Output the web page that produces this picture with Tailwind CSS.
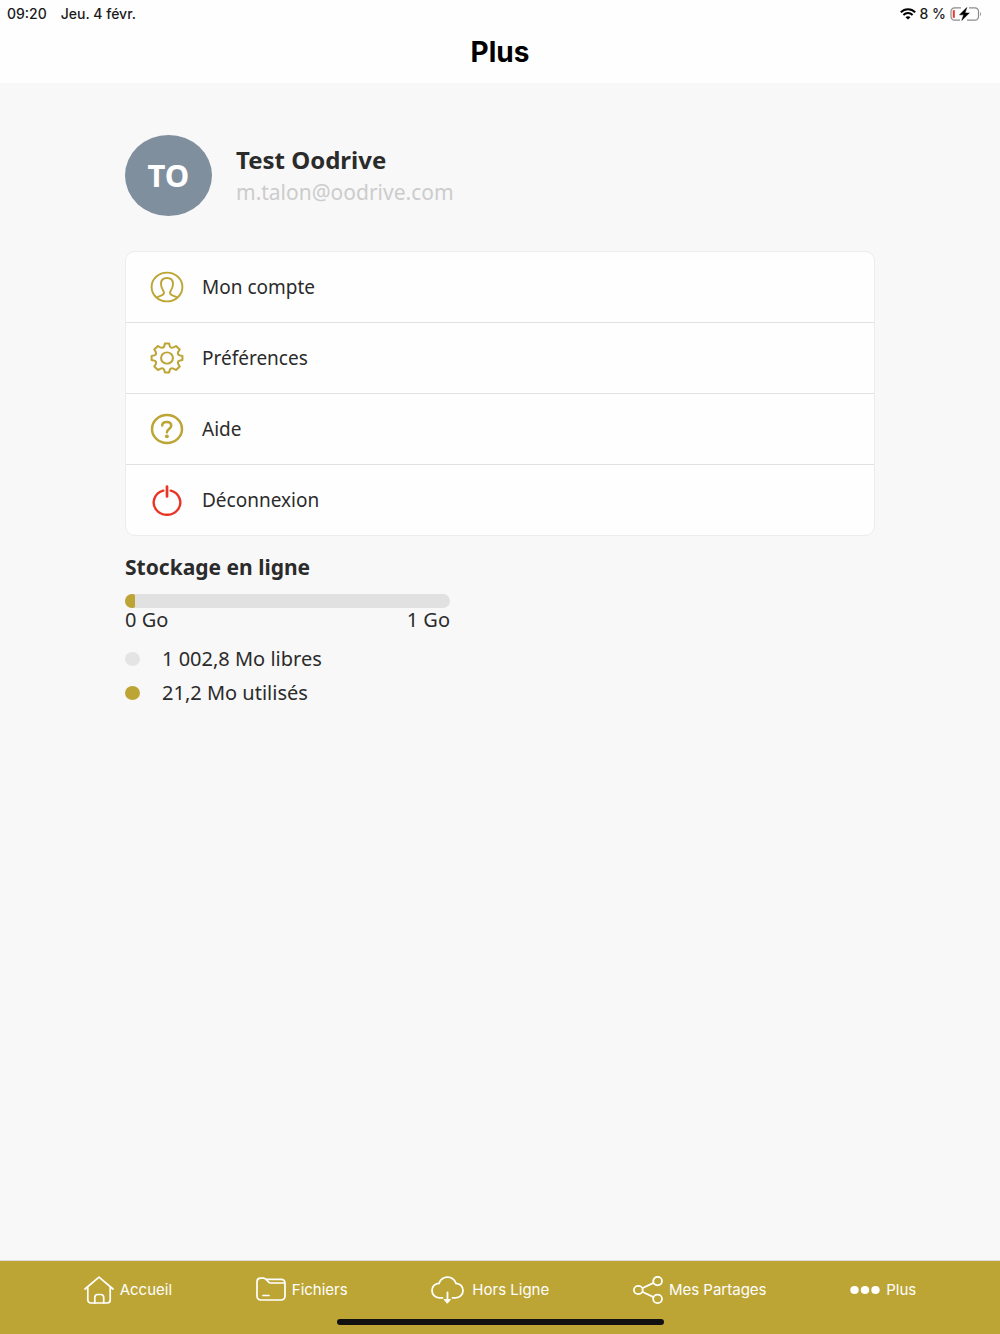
<!DOCTYPE html>
<html lang="fr">
<head>
    <meta charset="UTF-8">
    <meta name="viewport" content="width=device-width, initial-scale=1.0">
    <title>Plus</title>
    <script src="https://cdn.jsdelivr.net/npm/@tailwindcss/browser@4"></script>
</head>
<body class="flex flex-col min-h-screen bg-[#f8f8f8] text-[#2b2b2b] font-['Noto_Sans',sans-serif]">

    <header class="h-[83px] bg-[#fefefe] text-black font-['Inter',sans-serif]">
        <!-- status bar -->
        <div class="flex items-center justify-between h-7 pl-[7px] pr-[18px] text-sm font-medium text-[#1a1a1a]">
            <div class="flex gap-[14px]">
                <span>09:20</span>
                <span>Jeu. 4 févr.</span>
            </div>
            <div class="flex items-center gap-1">
                <svg class="w-4 h-3" viewBox="0 0 16 12" fill="none" stroke="#000" stroke-width="2">
                    <path d="M.8 4.3C4.8.2 11.2.2 15.2 4.3M3.4 7C6 4.4 10 4.4 12.6 7"/>
                    <path d="M8 11.6 5.5 9.2C6.900 7.900 9.100 7.900 10.500 9.200Z" fill="#000" stroke="none"/>
                </svg>
                <span>8 %</span>
                <svg class="w-8 h-[14px]" viewBox="0 0 32 14" fill="none">
                    <path d="M11 .8H4.5A3.5 3.5 0 0 0 1 4.300V9.700A3.500 3.500 0 0 0 4.500 13.200H10M19 .8H25A3.500 3.500 0 0 1 28.500 4.300V9.700A3.500 3.500 0 0 1 25 13.200H17" stroke="#8c8c8c" stroke-width="1.200"/>
                    <path d="M3.800 3.200V10.800" stroke="#e8372c" stroke-width="2"/>
                    <path d="M30 5V9C31.300 8.500 31.300 5.500 30 5Z" fill="#8c8c8c"/>
                    <path d="M16.800.5 9.500 7.800H13.700L11.700 13.500 19.300 6H15Z" fill="#000" stroke="#000" stroke-width=".5"/>
                </svg>
            </div>
        </div>
        <h1 class="text-center text-[28px] leading-12 font-bold">Plus</h1>
    </header>

    <main class="flex-1 px-[12.5%] pt-[52px]">

        <div class="flex items-center gap-6">
            <div class="flex items-center justify-center w-[87px] h-[81px] rounded-[50%] bg-[#7f8f9e] text-white text-[31px] font-bold">TO</div>
            <div>
                <p class="text-2xl leading-8 font-bold">Test Oodrive</p>
                <p class="text-[21px] leading-8 text-[#cccccc]">m.talon@oodrive.com</p>
            </div>
        </div>

        <ul class="mt-[35px] rounded-[10px] border border-[#ececec] bg-[#fefefe] divide-y divide-[#e2e2e2] text-[19px]">
            <li>
                <a href="#compte" class="flex items-center gap-[18px] h-[70px] pl-6">
                    <svg class="w-[34px] h-8" viewBox="0 0 34 32" fill="none" stroke="#bda535" stroke-width="1.900" stroke-linejoin="round">
                        <ellipse cx="17" cy="16" rx="15.400" ry="14.400"/>
                        <path d="M7 26.500C8.500 24.800 14 25 14 21.800C14 19.500 11 18.500 11 12.800C11 9 13 7 17 7S23 9 23 12.800C23 18.500 20 19.500 20 21.800C20 25 25.500 24.800 27 26.500"/>
                    </svg>
                    Mon compte
                </a>
            </li>
            <li>
                <a href="#preferences" class="flex items-center gap-[18px] h-[70px] pl-6">
                    <svg class="w-[34px] h-8" viewBox="0 0 32 32" preserveAspectRatio="none" fill="none" stroke="#bda535" stroke-width="1.900" stroke-linejoin="round">
                        <circle cx="16" cy="16" r="5.600"/>
                        <path d="M14 1.500H18Q18.500 5.300 20 5.700T24.500 4L28 7.500Q25.800 10.500 26.300 12T30.500 14V18Q26.700 18.500 26.300 20T28 24.500L24.500 28Q21.500 25.800 20 26.300T18 30.500H14Q13.500 26.700 12 26.300T7.500 28L4 24.500Q6.200 21.500 5.700 20T1.500 18V14Q5.300 13.500 5.700 12T4 7.500L7.500 4Q10.500 6.200 12 5.700T14 1.500Z"/>
                    </svg>
                    Préférences
                </a>
            </li>
            <li>
                <a href="#aide" class="flex items-center gap-[18px] h-[70px] pl-6">
                    <svg class="w-[34px] h-8" viewBox="0 0 34 32" fill="none" stroke="#bda535" stroke-width="2.500" stroke-linecap="round">
                        <ellipse cx="17" cy="16" rx="15" ry="14"/>
                        <path d="M12.200 12.500C12.200 10.200 14 9 16.700 9C19.500 9 21.200 10.500 21.200 12.700C21.200 16 16.900 15.900 16.900 19.300"/>
                        <ellipse cx="16.900" cy="23.400" rx="2" ry="1.800" fill="#bda535" stroke="none"/>
                    </svg>
                    Aide
                </a>
            </li>
            <li>
                <button type="button" class="flex items-center gap-[18px] w-full h-[70px] pl-6">
                    <svg class="w-[34px] h-8" viewBox="0 0 34 32" fill="none" stroke="#ea3323" stroke-width="2.400" stroke-linecap="round">
                        <path d="M13.300 6.700A13.300 12.300 0 1 0 20.700 6.700"/>
                        <path d="M17 2.500V12.500" stroke-width="2.700"/>
                    </svg>
                    Déconnexion
                </button>
            </li>
        </ul>

        <section class="w-[325px] max-w-full mt-[15px] text-xl">
            <h2 class="text-[21px] leading-8 font-bold">Stockage en ligne</h2>
            <div role="progressbar" aria-label="Stockage utilisé" aria-valuenow="21.2" aria-valuemin="0" aria-valuemax="1024" class="mt-[11px] h-[14px] rounded-full bg-[#e1e1e1] overflow-hidden">
                <div class="h-full rounded-r-[2px] bg-[#bda535]" style="width: 3%"></div>
            </div>
            <div class="flex justify-between leading-6">
                <span>0 Go</span>
                <span>1 Go</span>
            </div>
            <ul class="mt-[10px] leading-[34px]">
                <li class="flex items-center gap-[22px]"><span class="w-[15px] h-[14px] rounded-[50%] bg-[#e4e4e4]"></span>1 002,8 Mo libres</li>
                <li class="flex items-center gap-[22px]"><span class="w-[15px] h-[14px] rounded-[50%] bg-[#bda535]"></span>21,2 Mo utilisés</li>
            </ul>
        </section>

    </main>

    <footer class="flex flex-col items-center h-[74px] border-t border-[#dcdcdc] bg-[#bda535] text-white font-['Inter',sans-serif]">
        <nav class="flex items-center justify-evenly w-full h-[58px] text-[15px]">
            <a href="#accueil" class="flex items-center gap-[6px]">
                <svg class="w-[30px] h-7" viewBox="0 0 30 28" fill="none" stroke="#fff" stroke-width="1.700" stroke-linecap="round" stroke-linejoin="round">
                    <path d="M1 13 15 1.200 29 13M3.800 11V24A3 3 0 0 0 6.800 27H23.200A3 3 0 0 0 26.200 24V11"/>
                    <path d="M10.800 27V21.500A3 3 0 0 1 13.800 18.500H16.700A3 3 0 0 1 19.700 21.500V27"/>
                </svg>
                Accueil
            </a>
            <a href="#fichiers" class="flex items-center gap-[6px]">
                <svg class="w-[30px] h-7" viewBox="0 0 30 28" fill="none" stroke="#fff" stroke-width="1.700" stroke-linecap="round" stroke-linejoin="round">
                    <path d="M10.500 3.400H25.500A3.500 3.500 0 0 1 29 6.900V20.200A3.800 3.800 0 0 1 25.200 24H4.800A3.800 3.800 0 0 1 1 20.200V5.500A3.500 3.500 0 0 1 4.500 2.200H7.500C11 2.200 11.500 7 14.500 7H28.800"/>
                    <path d="M7 19.500H13"/>
                </svg>
                Fichiers
            </a>
            <a href="#hors-ligne" class="flex items-center gap-2">
                <svg class="w-[33px] h-7" viewBox="0 0 33 28" fill="none" stroke="#fff" stroke-width="1.800" stroke-linecap="round" stroke-linejoin="round">
                    <path d="M11.500 21.800H8.500C4 21.800 1 18.500 1 14.500C1 10.500 4 7.500 8 7.300C9.500 3.500 12.700 1.200 16.500 1.200S23.500 3.500 25 7.300C29 7.500 32 10.500 32 14.500C32 18.500 29 21.800 24.500 21.800H21.500"/>
                    <path d="M16.500 16.500V25"/>
                    <path d="M13.500 23.500H19.500L16.500 27Z" fill="#fff" stroke-width="1"/>
                </svg>
                Hors Ligne
            </a>
            <a href="#partages" class="flex items-center gap-[6px]">
                <svg class="w-[30px] h-7" viewBox="0 0 30 28" fill="none" stroke="#fff" stroke-width="1.800">
                    <ellipse cx="5.300" cy="14" rx="4.400" ry="4.200"/>
                    <ellipse cx="24.600" cy="5.100" rx="4.400" ry="4.200"/>
                    <ellipse cx="24.600" cy="22.900" rx="4.400" ry="4.200"/>
                    <path d="M9.200 12.200 20.600 6.900M9.200 15.800 20.600 21.100"/>
                </svg>
                Mes Partages
            </a>
            <a href="#plus" aria-current="page" class="flex items-center gap-[6px]">
                <svg class="w-[30px] h-7" viewBox="0 0 30 28" fill="#fff">
                    <ellipse cx="4.500" cy="14" rx="4.200" ry="4"/>
                    <ellipse cx="15" cy="14" rx="4.200" ry="4"/>
                    <ellipse cx="25.500" cy="14" rx="4.200" ry="4"/>
                </svg>
                Plus
            </a>
        </nav>
        <!-- home indicator -->
        <div class="w-[327px] h-[6px] rounded-full bg-[#111111]"></div>
    </footer>

</body>
</html>
